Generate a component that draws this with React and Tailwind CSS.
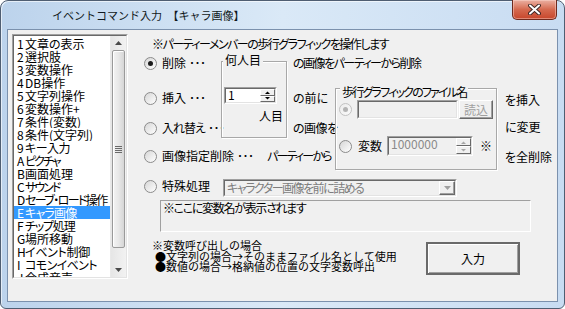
import React from "react";

const items = [
  ["1", "文章の表示", ""],
  ["2", "選択肢", ""],
  ["3", "変数操作", ""],
  ["4", "DB操作", ""],
  ["5", "文字列操作", ""],
  ["6", "変数操作+", ""],
  ["7", "条件(変数)", ""],
  ["8", "条件(文字列)", ""],
  ["9", "キー入力", "tracking-[-0.5px]"],
  ["A", "ピクチャ", "tracking-[-2px]"],
  ["B", "画面処理", ""],
  ["C", "サウンド", "tracking-[-2px]"],
  ["D", "セーブ・ロード操作", "tracking-[-1.6px]"],
  ["E", "キャラ画像", "tracking-[-0.8px]"],
  ["F", "チップ処理", "tracking-[-1.2px]"],
  ["G", "場所移動", ""],
  ["H", "イベント制御", "tracking-[-0.3px]"],
  ["I", "コモンイベント", "tracking-[-0.6px]"],
  ["J", "合成音声", ""],
];

function Radio({ checked, disabled, className = "" }) {
  return (
    <div
      className={`w-[13px] h-[13px] shrink-0 rounded-full border flex items-center justify-center bg-gradient-to-br ${
        disabled
          ? "border-[#c2c2c2] from-[#ececec] to-[#fafafa]"
          : "border-[#8b8b8b] from-[#d6d6d6] to-[#ffffff]"
      } ${className}`}
    >
      {checked && (
        <div
          className={`w-[5px] h-[5px] rounded-full ${
            disabled ? "bg-[#b4b4b4]" : "bg-[#1a1a1a]"
          }`}
        />
      )}
    </div>
  );
}

function Sunken({ className = "", inner = "", children }) {
  return (
    <div
      className={`shrink-0 border border-t-[#a0a0a0] border-l-[#a0a0a0] border-r-white border-b-white ${className}`}
    >
      <div
        className={`w-full h-full border border-t-[#696969] border-l-[#696969] border-r-[#e3e3e3] border-b-[#e3e3e3] ${inner}`}
      >
        {children}
      </div>
    </div>
  );
}

function Tri({ up, color }) {
  return (
    <svg width="5" height="3" viewBox="0 0 5 3">
      <path d={up ? "M0 3 L5 3 L2.5 0.5 Z" : "M0 0 L5 0 L2.5 2.5 Z"} fill={color} />
    </svg>
  );
}

function SpinBtn({ up, disabled }) {
  return (
    <div className="flex-1 flex items-center justify-center border border-t-white border-l-white border-r-[#696969] border-b-[#696969] bg-[#f0f0f0]">
      <Tri up={up} color={disabled ? "#a8a8a8" : "#000"} />
    </div>
  );
}

function Spinner({ className, text, disabled }) {
  return (
    <Sunken
      className={className}
      inner={`flex ${disabled ? "bg-[#f0f0f0] text-[#8a8a8a]" : "bg-white text-black"}`}
    >
      <div className="flex-1 pl-[2px] leading-[12px]">{text}</div>
      <div className="w-[15px] flex flex-col">
        <SpinBtn up disabled={disabled} />
        <SpinBtn disabled={disabled} />
      </div>
    </Sunken>
  );
}

function RadioRow({ className = "", checked, label, dots, labelCls = "" }) {
  return (
    <div className={`h-[22px] flex items-center whitespace-nowrap ${className}`}>
      <Radio checked={checked} />
      <span className={`ml-[5px] ${labelCls}`}>{label}</span>
      <span className="ml-[3px] tracking-[-0.5px]">{dots}</span>
    </div>
  );
}

function ScrollBar() {
  return (
    <div className="w-[16px] shrink-0 flex flex-col bg-gradient-to-r from-[#e6e6e6] to-[#f2f2f2] border-l border-[#e9e9e9]">
      <div className="h-[14px] flex items-center justify-center">
        <svg width="7" height="4" viewBox="0 0 7 4">
          <path d="M0 4 L7 4 L3.5 0 Z" fill="#4a4a4a" />
        </svg>
      </div>
      <div className="h-[198px] mx-[1px] rounded-[2px] border border-[#9a9a9a] bg-gradient-to-r from-[#f4f4f4] via-[#e8e8e8] to-[#d6d6d6] flex items-center justify-center shadow-[inset_1px_1px_0_#fff]">
        <div className="flex flex-col gap-[1px]">
          <div className="w-[7px] h-[1px] bg-[#6a6a6a]" />
          <div className="w-[7px] h-[1px] bg-[#6a6a6a]" />
          <div className="w-[7px] h-[1px] bg-[#6a6a6a]" />
          <div className="w-[7px] h-[1px] bg-[#6a6a6a]" />
        </div>
      </div>
      <div className="flex-1" />
      <div className="h-[15px] flex items-center justify-center">
        <svg width="7" height="4" viewBox="0 0 7 4">
          <path d="M0 0 L7 0 L3.5 4 Z" fill="#4a4a4a" />
        </svg>
      </div>
    </div>
  );
}

const groupCls =
  "border border-[#a8a8a8] shadow-[inset_1px_1px_0_#ffffff,1px_1px_0_#ffffff] flex flex-col";

export default function App() {
  return (
    <div className="w-[565px] h-[309px] bg-white font-['Noto_Sans_CJK_JP',sans-serif] [font-feature-settings:'palt'] text-[12px] leading-[14px] text-black">
      <div className="w-full h-full flex flex-col rounded-t-[8px] rounded-b-[6px] border border-[#4f5e72] bg-gradient-to-r from-[#bcd3ec] via-[#dae9f7] to-[#c8dcf2] px-[6px] pb-[6px] shadow-[inset_1px_1px_0_rgba(255,255,255,0.6)]">
        {/* Title bar */}
        <div className="h-[28px] shrink-0 flex items-start">
          <div className="ml-[45px] mt-[7px] text-[11px] [font-feature-settings:normal] text-[#101820] whitespace-nowrap">
            イベントコマンド入力　【キャラ画像】
          </div>
          <div className="ml-auto -mt-px mr-px w-[45px] h-[20px] rounded-b-[5px] border border-t-0 border-[#6e2a1e] bg-gradient-to-b from-[#eab0a2] via-[#d5694f] to-[#c7452a] shadow-[inset_0_0_0_1px_rgba(255,220,210,0.45)] flex items-center justify-center">
            <svg width="13" height="11" viewBox="0 0 13 11">
              <path d="M2 1.5 L11 9.5 M11 1.5 L2 9.5" stroke="#3b2624" strokeWidth="3.8" strokeLinecap="round" />
              <path d="M2 1.5 L11 9.5 M11 1.5 L2 9.5" stroke="#ffffff" strokeWidth="2" strokeLinecap="round" />
            </svg>
          </div>
        </div>

        {/* Client area */}
        <div className="flex-1 flex border border-[#7b91ad] bg-[#f0f0f0]">
          {/* List box */}
          <Sunken className="ml-[4px] mt-[4px] w-[116px] h-[245px]" inner="bg-white flex">
            <div className="flex-1 overflow-hidden pt-[1px]">
              {items.map(([k, t, tr]) => (
                <div
                  key={k}
                  className={`h-[13px] leading-[13px] flex pl-[3px] whitespace-nowrap overflow-hidden ${
                    k === "E" ? "bg-[#3399ff] text-white" : ""
                  }`}
                >
                  <span className="w-[8px] shrink-0">{k}</span>
                  <span className={tr}>{t}</span>
                </div>
              ))}
            </div>
            <ScrollBar />
          </Sunken>

          {/* Right panel */}
          <div className="ml-[16px] w-[413px] flex flex-col">
            <div className="mt-[7px] ml-[8px] h-[14px] whitespace-nowrap tracking-[-1.5px]">
              ※パーティーメンバーの歩行グラフィックを操作します
            </div>

            <div className="flex h-[121px]">
              {/* Column A: radios */}
              <div className="w-[77px] shrink-0 flex flex-col">
                <RadioRow className="mt-[1px]" checked label="削除" dots="･･･" />
                <RadioRow className="mt-[13px]" label="挿入" dots="･･･" />
                <RadioRow className="mt-[8px]" label="入れ替え" labelCls="tracking-[-1px]" dots="･･･" />
                <RadioRow className="mt-[6px]" label="画像指定削除" dots="･･･" />
              </div>

              {/* Column B: 何人目 */}
              <div className="w-[66px] shrink-0 flex flex-col">
                <div className={`mt-[10px] h-[77px] ${groupCls}`}>
                  <span className="self-start ml-[1px] -mt-[9px] px-[2px] bg-[#f0f0f0] h-[14px]">
                    何人目
                  </span>
                  <Spinner className="mt-[20px] ml-[2px] w-[53px] h-[17px]" text="1" />
                  <span className="self-end mt-[5px] mr-[3px]">人目</span>
                </div>
                <div className="mt-[7px] h-[22px] flex items-center ml-[46px] whitespace-nowrap tracking-[-1.8px]">
                  パーティーから
                </div>
              </div>

              {/* Column C */}
              <div className="w-[48px] shrink-0 flex flex-col pl-[6px] whitespace-nowrap">
                <div className="mt-[1px] h-[22px] flex items-center tracking-[-1.5px]">の画像をパーティーから削除</div>
                <div className="mt-[13px] h-[22px] flex items-center">の前に</div>
                <div className="mt-[8px] h-[22px] flex items-center tracking-[-0.5px]">の画像を</div>
              </div>

              {/* Column D: file group */}
              <div className="w-[162px] shrink-0 flex flex-col">
                <div className={`mt-[37px] h-[82px] ${groupCls}`}>
                  <span className="self-start ml-[4px] -mt-[4px] px-[2px] bg-[#f0f0f0] h-[14px] whitespace-nowrap tracking-[-1.8px]">
                    歩行グラフィックのファイル名
                  </span>
                  <div className="mt-[1px] h-[19px] flex items-center">
                    <Radio checked disabled className="ml-[3px]" />
                    <Sunken className="ml-[5px] w-[101px] h-[19px]" inner="bg-[#f0f0f0]" />
                    <div className="ml-px w-[34px] h-[19px] shrink-0 border border-t-white border-l-white border-r-[#696969] border-b-[#696969] shadow-[inset_-1px_-1px_0_#a0a0a0] bg-[#f0f0f0] flex items-center justify-center text-[#a0a0a0] leading-[14px]">
                      読込
                    </div>
                  </div>
                  <div className="mt-[17px] h-[20px] flex items-center whitespace-nowrap">
                    <Radio className="ml-[3px]" />
                    <span className="ml-[6px]">変数</span>
                    <Spinner disabled className="ml-[5px] w-[86px] h-[20px]" text="1000000" />
                    <span className="ml-[7px]">※</span>
                  </div>
                </div>
              </div>

              {/* Column E */}
              <div className="ml-[8px] flex flex-col whitespace-nowrap">
                <div className="mt-[42px] h-[14px]">を挿入</div>
                <div className="mt-[13px] h-[14px]">に変更</div>
                <div className="mt-[16px] h-[14px]">を全削除</div>
              </div>
            </div>

            {/* 特殊処理 row */}
            <div className="mt-[7px] h-[18px] flex items-start">
              <div className="w-[79px] shrink-0 h-[14px] flex items-center gap-[5px] whitespace-nowrap">
                <Radio />
                <span>特殊処理</span>
              </div>
              <Sunken className="w-[234px] h-[18px]" inner="bg-[#f0f0f0] flex">
                <div className="flex-1 pl-[2px] leading-[14px] text-[#7d7d7d] whitespace-nowrap overflow-hidden tracking-[-1.5px]">
                  キャラクター画像を前に詰める
                </div>
                <div className="w-[16px] shrink-0 border border-t-white border-l-white border-r-[#696969] border-b-[#696969] shadow-[inset_-1px_-1px_0_#a0a0a0] bg-[#f0f0f0] flex items-center justify-center">
                  <svg width="7" height="4" viewBox="0 0 7 4">
                    <path d="M0 0 L7 0 L3.5 4 Z" fill="#a0a0a0" />
                  </svg>
                </div>
              </Sunken>
            </div>

            {/* Variable name box */}
            <div className="mt-[3px] ml-[16px] w-[371px] h-[32px] border border-t-[#a0a0a0] border-l-[#a0a0a0] border-r-white border-b-white pl-[2px] leading-[14px] whitespace-nowrap tracking-[-1.3px]">
              ※ここに変数名が表示されます
            </div>

            {/* Bottom */}
            <div className="flex">
              <div className="ml-[8px] mt-[8px] w-[274px] shrink-0 text-[11px] leading-[10.5px] [font-feature-settings:normal] whitespace-nowrap">
                <div>※変数呼び出しの場合</div>
                <div className="pl-[3px]">●文字列の場合→そのままファイル名として使用</div>
                <div className="pl-[3px]">●数値の場合→格納値の位置の文字変数呼出</div>
              </div>
              <div className="mt-[10px] w-[94px] h-[33px] shrink-0 border-2 border-[#6a6a6a] bg-[#f0f0f0] shadow-[inset_1px_1px_0_#ffffff,inset_-1px_-1px_0_#a0a0a0] flex items-center justify-center leading-[14px]">
                入力
              </div>
            </div>
          </div>
        </div>
      </div>
    </div>
  );
}
